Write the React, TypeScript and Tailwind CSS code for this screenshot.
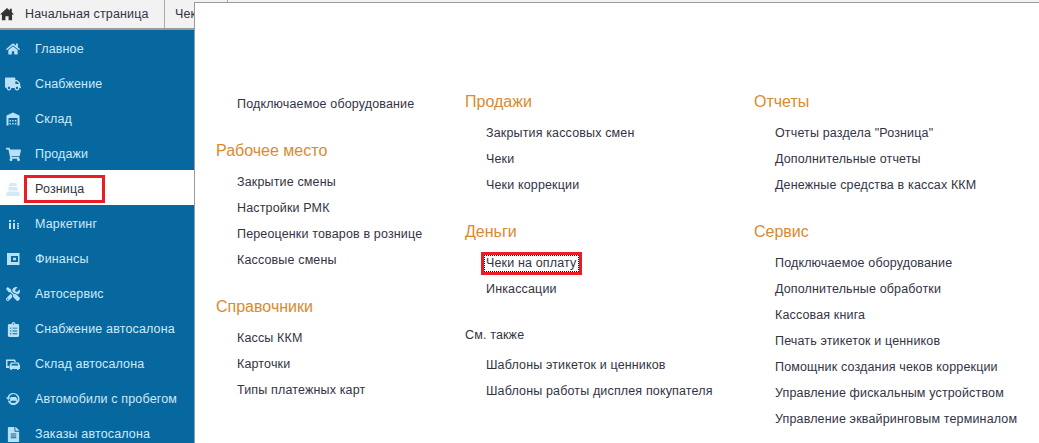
import type { ReactNode } from "react"
import { FaClipboardList, FaFileAlt, FaHome, FaShoppingCart, FaTools, FaTruck } from "react-icons/fa"

const Ic = ({ children }: { children: ReactNode }) => (
  <svg width="16" height="16" viewBox="0 0 16 16" fill="currentColor">
    {children}
  </svg>
)

const icons: Record<string, ReactNode> = {
  home: <FaHome size={14} />,
  truck: <FaTruck size={16} />,
  warehouse: (
    <Ic>
      <path fillRule="evenodd" d="M8 1.500 1.500 4.500v10h13v-10zM3.500 7h9v7.500h-9zM4.500 9h1.500v1.500H4.500zm2.700 0h1.500v1.500H7.200zm2.700 0h1.500v1.500H9.900zM4.500 12h1.500v1.500H4.500zm2.700 0h1.500v1.500H7.200zm2.700 0h1.500v1.500H9.900z" />
    </Ic>
  ),
  cart: <FaShoppingCart size={15} />,
  retail: (
    <Ic>
      <path d="M4.500 2h7l.5 3H4zM3.800 6h8.400l.6 3.500H3.200zM2 10.500h12l1 4.500H1z" />
    </Ic>
  ),
  bars: (
    <Ic>
      <path d="M4 4h2v2H4zm0 3h2v6H4zm4 0h2v6H8zm0-1.500h2V4H8zM12 7h2v1.500h-2zm0 2.300h2v1.500h-2zm0 2.200h2V13h-2z" />
    </Ic>
  ),
  wallet: (
    <Ic>
      <path fillRule="evenodd" d="M2 2h12.500v12H2zM6 5v6h7V5zM8 6.800h3v2.500H8z" />
    </Ic>
  ),
  tools: <FaTools size={14} />,
  clipboard: <FaClipboardList size={15} />,
  cars: (
    <Ic>
      <path fillRule="evenodd" d="M1 3.500h9l1 2.500H9.400L9 5H2.500v5H4v2H1zM6 6.500h7.500l1.500 3v3.500h-1.500V14H12v-1H7v1H5.500v-1H4.500V9.500zM7 7.800l-.8 1.700h7.100l-.7-1.700z" />
    </Ic>
  ),
  used: (
    <Ic>
      <path fillRule="evenodd" d="M8.500 2a6 6 0 1 1-5.700 7.800l1.500-.4A4.500 4.500 0 1 0 4 6.500h1.700L3.200 9 .8 6.500h1.700A6 6 0 0 1 8.500 2zM6 6h5l1 2v2.500h-1.200v-.7H6.200v.7H5V8z" />
    </Ic>
  ),
  doc: <FaFileAlt size={15} />,
}

const nav = [
  ["home", "Главное"],
  ["truck", "Снабжение"],
  ["warehouse", "Склад"],
  ["cart", "Продажи"],
  ["retail", "Розница"],
  ["bars", "Маркетинг"],
  ["wallet", "Финансы"],
  ["tools", "Автосервис"],
  ["clipboard", "Снабжение автосалона"],
  ["cars", "Склад автосалона"],
  ["used", "Автомобили с пробегом"],
  ["doc", "Заказы автосалона"],
]

function Heading({ children, className = "" }: { children: ReactNode; className?: string }) {
  return <div className={`text-[16px] leading-[20px] tracking-normal text-[#d98a30] ${className}`}>{children}</div>
}

function Links({ items }: { items: string[] }) {
  return (
    <div className="flex flex-col pl-[21px]">
      {items.map((t) => (
        <div key={t} className="h-[26px] leading-[26px] whitespace-nowrap">
          {t}
        </div>
      ))}
    </div>
  )
}

export default function App() {
  return (
    <div className="h-[443px] w-[1039px] overflow-hidden bg-white font-['Liberation_Sans',Arial,sans-serif] text-[12.5px] tracking-[0.15px] text-[#333344]">
      <div className="flex h-[30px] border-b-2 border-[#9a9a9a] bg-[#f2f2f2]">
        <div className="flex w-[165px] items-center border-r border-[#aaaaaa]">
          <svg width="14" height="14" viewBox="0 0 16 16" fill="#333333">
            <path d="M8 1 0 8.500h2.200V15h4v-4.500h3.600V15h4V8.500H16l-2.500-2.400V2h-2.300v1.900z" />
          </svg>
          <span className="ml-[11px]">Начальная страница</span>
        </div>
        <div className="flex w-[63px] items-center border-r border-[#aaaaaa] pl-[10px]">Чеки</div>
      </div>
      <div className="flex h-[413px]">
        <nav className="w-[194px] shrink-0 bg-[#06689e]">
          {nav.map(([icon, label]) => {
            const active = label === "Розница"
            return (
              <div
                key={label}
                className={`relative flex h-[35px] items-center pt-[3px] ${active ? "bg-white text-[#333344]" : "text-[#cfeafa]"}`}
              >
                <span className={`flex w-[26px] justify-center ${active ? "text-[#d4e9f8]" : "text-[#b9e0f6]"}`}>
                  {icons[icon]}
                </span>
                <span className="ml-[9px] whitespace-nowrap">{label}</span>
                {active && <span className="absolute left-[24px] top-[5px] h-[28px] w-[81px] border-[3px] border-[#ec1c24]" />}
              </div>
            )
          })}
        </nav>
        <main className="relative -mt-[28px] flex h-[441px] flex-1 border-l border-t border-[#9a9a9a] bg-white pl-[21px]">
          <div className="w-[249px] pt-[88px]">
            <Links items={["Подключаемое оборудование"]} />
            <Heading className="mt-[24px] mb-[8px]">Рабочее место</Heading>
            <Links items={["Закрытие смены", "Настройки РМК", "Переоценки товаров в рознице", "Кассовые смены"]} />
            <Heading className="mt-[24px] mb-[8px]">Справочники</Heading>
            <Links items={["Кассы ККМ", "Карточки", "Типы платежных карт"]} />
          </div>
          <div className="w-[289px] pt-[89px]">
            <Heading className="mb-[8px]">Продажи</Heading>
            <Links items={["Закрытия кассовых смен", "Чеки", "Чеки коррекции"]} />
            <Heading className="mt-[24px] mb-[8px]">Деньги</Heading>
            <div className="relative">
              <Links items={["Чеки на оплату", "Инкассации"]} />
              <span className="absolute left-[16px] top-[2px] h-[23px] w-[101px] border-[3px] border-[#ec1c24]">
                <span className="block h-full w-full border border-dotted border-black" />
              </span>
            </div>
            <div className="mt-[23px] mb-[7px] leading-[20px]">См. также</div>
            <Links items={["Шаблоны этикеток и ценников", "Шаблоны работы дисплея покупателя"]} />
          </div>
          <div className="pt-[89px]">
            <Heading className="mb-[8px]">Отчеты</Heading>
            <Links items={['Отчеты раздела "Розница"', "Дополнительные отчеты", "Денежные средства в кассах ККМ"]} />
            <Heading className="mt-[24px] mb-[8px]">Сервис</Heading>
            <Links
              items={[
                "Подключаемое оборудование",
                "Дополнительные обработки",
                "Кассовая книга",
                "Печать этикеток и ценников",
                "Помощник создания чеков коррекции",
                "Управление фискальным устройством",
                "Управление эквайринговым терминалом",
              ]}
            />
          </div>
        </main>
      </div>
    </div>
  )
}
